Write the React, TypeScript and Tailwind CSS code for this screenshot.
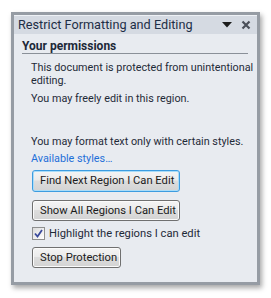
import React from "react";

const font = { fontFamily: 'Roboto, "Open Sans", sans-serif' };

function Btn({ children, w, focus }: { children: React.ReactNode; w: string; focus?: boolean }) {
  return (
    <div
      className={
        "flex items-center pl-[7px] whitespace-nowrap rounded-[3px] border text-[11.2px] text-[#1b1b1b] leading-none bg-[linear-gradient(#f4f4f4,#ebebeb_45%,#dddddd_50%,#d3d3d3)] " +
        w +
        (focus
          ? " h-[22px] border-[#3c9ce0] shadow-[inset_0_0_0_1px_#a9dcf8]"
          : " h-[21px] border-[#707070] shadow-[inset_0_0_0_1px_#fbfbfb]")
      }
    >
      {children}
    </div>
  );
}

export default function App() {
  return (
    <div className="w-[271px] h-[298px] bg-white pt-[12px] pl-[11px]" style={font}>
      <div className="w-[249px] h-[273px] border-[3px] border-[#969ca4] bg-[#e8ebf0] shadow-[2px_3px_5px_rgba(0,0,0,0.35)] flex flex-col">
        <div className="h-[19px] bg-[#d5dae2] flex items-center pl-[4px] pr-[6px] border-t border-[#eef1f5]">
          <span className="text-[12.7px] text-[#1e2e46] leading-none flex-1 whitespace-nowrap">Restrict Formatting and Editing</span>
          <svg width="10" height="6" viewBox="0 0 10 6" className="mr-[9px]">
            <path d="M0 0 H10 L5 5.5 Z" fill="#1c1c1c" />
          </svg>
          <svg width="10" height="10" viewBox="0 0 10 10">
            <path d="M1.5 1.5 L8.5 8.5 M8.5 1.5 L1.5 8.5" stroke="#4b5059" strokeWidth="2.2" />
          </svg>
        </div>
        <div className="mx-[8px] mr-[9px] mt-[5px] leading-[14px] text-[12px] font-bold text-[#1c2838] border-b border-[#8a9098]">
          Your permissions
        </div>
        <div className="pl-[17px] text-[10.8px] text-[#1f2a38]">
          <p className="mt-[7px] leading-[13px]">This document is protected from unintentional editing.</p>
          <p className="mt-[5px] leading-[13px]">You may freely edit in this region.</p>
          <p className="mt-[30px] leading-[13px]">You may format text only with certain styles.</p>
          <p className="mt-[4px] leading-[13px] text-[#1e6fd9]">Available styles…</p>
          <div className="mt-[5px] ml-[1px]">
            <Btn w="w-[148px]" focus>
              Find Next Region I Can Edit
            </Btn>
          </div>
          <div className="mt-[8px] ml-[1px]">
            <Btn w="w-[148px]">Show All Regions I Can Edit</Btn>
          </div>
          <div className="mt-[6px] ml-[1px] flex items-center h-[13px]">
            <div className="w-[13px] h-[13px] border border-[#8e8f8f] bg-[linear-gradient(135deg,#dcdcdc,#ffffff)] flex items-center justify-center">
              <svg width="9" height="9" viewBox="0 0 9 9">
                <path d="M1 4.5 L3.5 7.5 L8 1" stroke="#3a4a9c" strokeWidth="1.8" fill="none" />
              </svg>
            </div>
            <span className="ml-[4px] leading-[13px] whitespace-nowrap text-[11.2px]">Highlight the regions I can edit</span>
          </div>
          <div className="mt-[7px] ml-[1px]">
            <Btn w="w-[89px]">Stop Protection</Btn>
          </div>
        </div>
      </div>
    </div>
  );
}
